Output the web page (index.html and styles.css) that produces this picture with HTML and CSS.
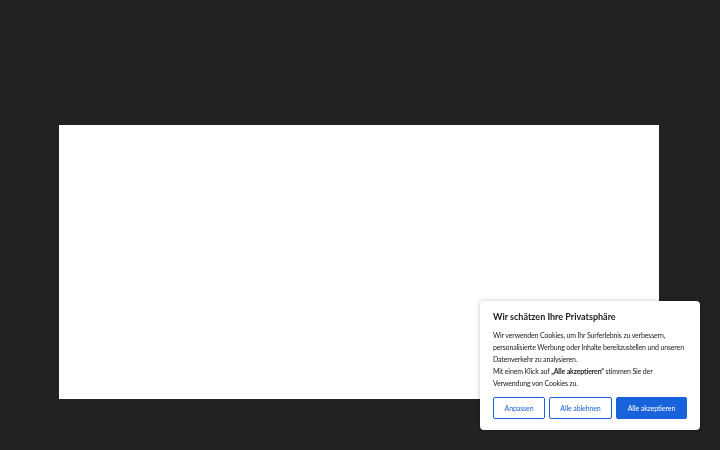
FILE: index.html
```html
<!DOCTYPE html>
<html lang="de">
<head>
    <meta charset="UTF-8" />
    <meta name="viewport" content="width=device-width, initial-scale=1" />
    <title>Startseite</title>
    <link rel="stylesheet" href="styles.css">
</head>
<body>
    <div class="page">
        <div class="frame"></div>
    </div>

    <div class="cookie-banner">
        <h2 class="cookie-title">Wir schätzen Ihre Privatsphäre</h2>
        <p class="cookie-text">
            Wir verwenden Cookies, um Ihr Surferlebnis zu verbessern, personalisierte Werbung oder Inhalte bereitzustellen und unseren Datenverkehr zu analysieren.<br />
            Mit einem Klick auf <b>„Alle akzeptieren“</b> stimmen Sie der Verwendung von Cookies zu.
        </p>
        <div class="cookie-buttons">
            <button class="btn btn-outline">Anpassen</button>
            <button class="btn btn-outline">Alle ablehnen</button>
            <button class="btn btn-primary">Alle akzeptieren</button>
        </div>
    </div>
</body>
</html>
```

FILE: styles.css
```css
body {
    margin: 0;
    background-color: #222222;
    font-family: "Lato", "Noto Sans", sans-serif;
}
.page {
    padding: 125px 0 0 59px;
}
.frame {
    background-color: #ffffff;
    width: 600px;
    height: 274px;
}
.cookie-banner {
    position: fixed;
    right: 20px;
    bottom: 20px;
    width: 194px;
    padding: 10px 13px 11px 13px;
    background-color: #ffffff;
    border-radius: 4px;
    box-shadow: 0 0 4px rgba(0, 0, 0, 0.25);
    color: #212121;
}
.cookie-title {
    margin: 0 0 6px 0;
    font-size: 9px;
    font-weight: bold;
    line-height: 12px;
}
.cookie-text {
    margin: 0 0 8px 0;
    font-size: 7px;
    letter-spacing: -0.15px;
    line-height: 12px;
}
.cookie-buttons {
    display: flex;
    gap: 4px;
}
.btn {
    height: 22px;
    border-radius: 2px;
    font-family: inherit;
    font-size: 7px;
    letter-spacing: -0.1px;
    cursor: pointer;
    padding: 0;
}
.btn-outline {
    background-color: #ffffff;
    border: 1px solid #1863dc;
    color: #1863dc;
}
.btn-outline:first-child {
    width: 52px;
}
.btn-outline:nth-child(2) {
    width: 63px;
}
.btn-primary {
    flex: 1;
    background-color: #1863dc;
    border: 1px solid #1863dc;
    color: #ffffff;
}
```
